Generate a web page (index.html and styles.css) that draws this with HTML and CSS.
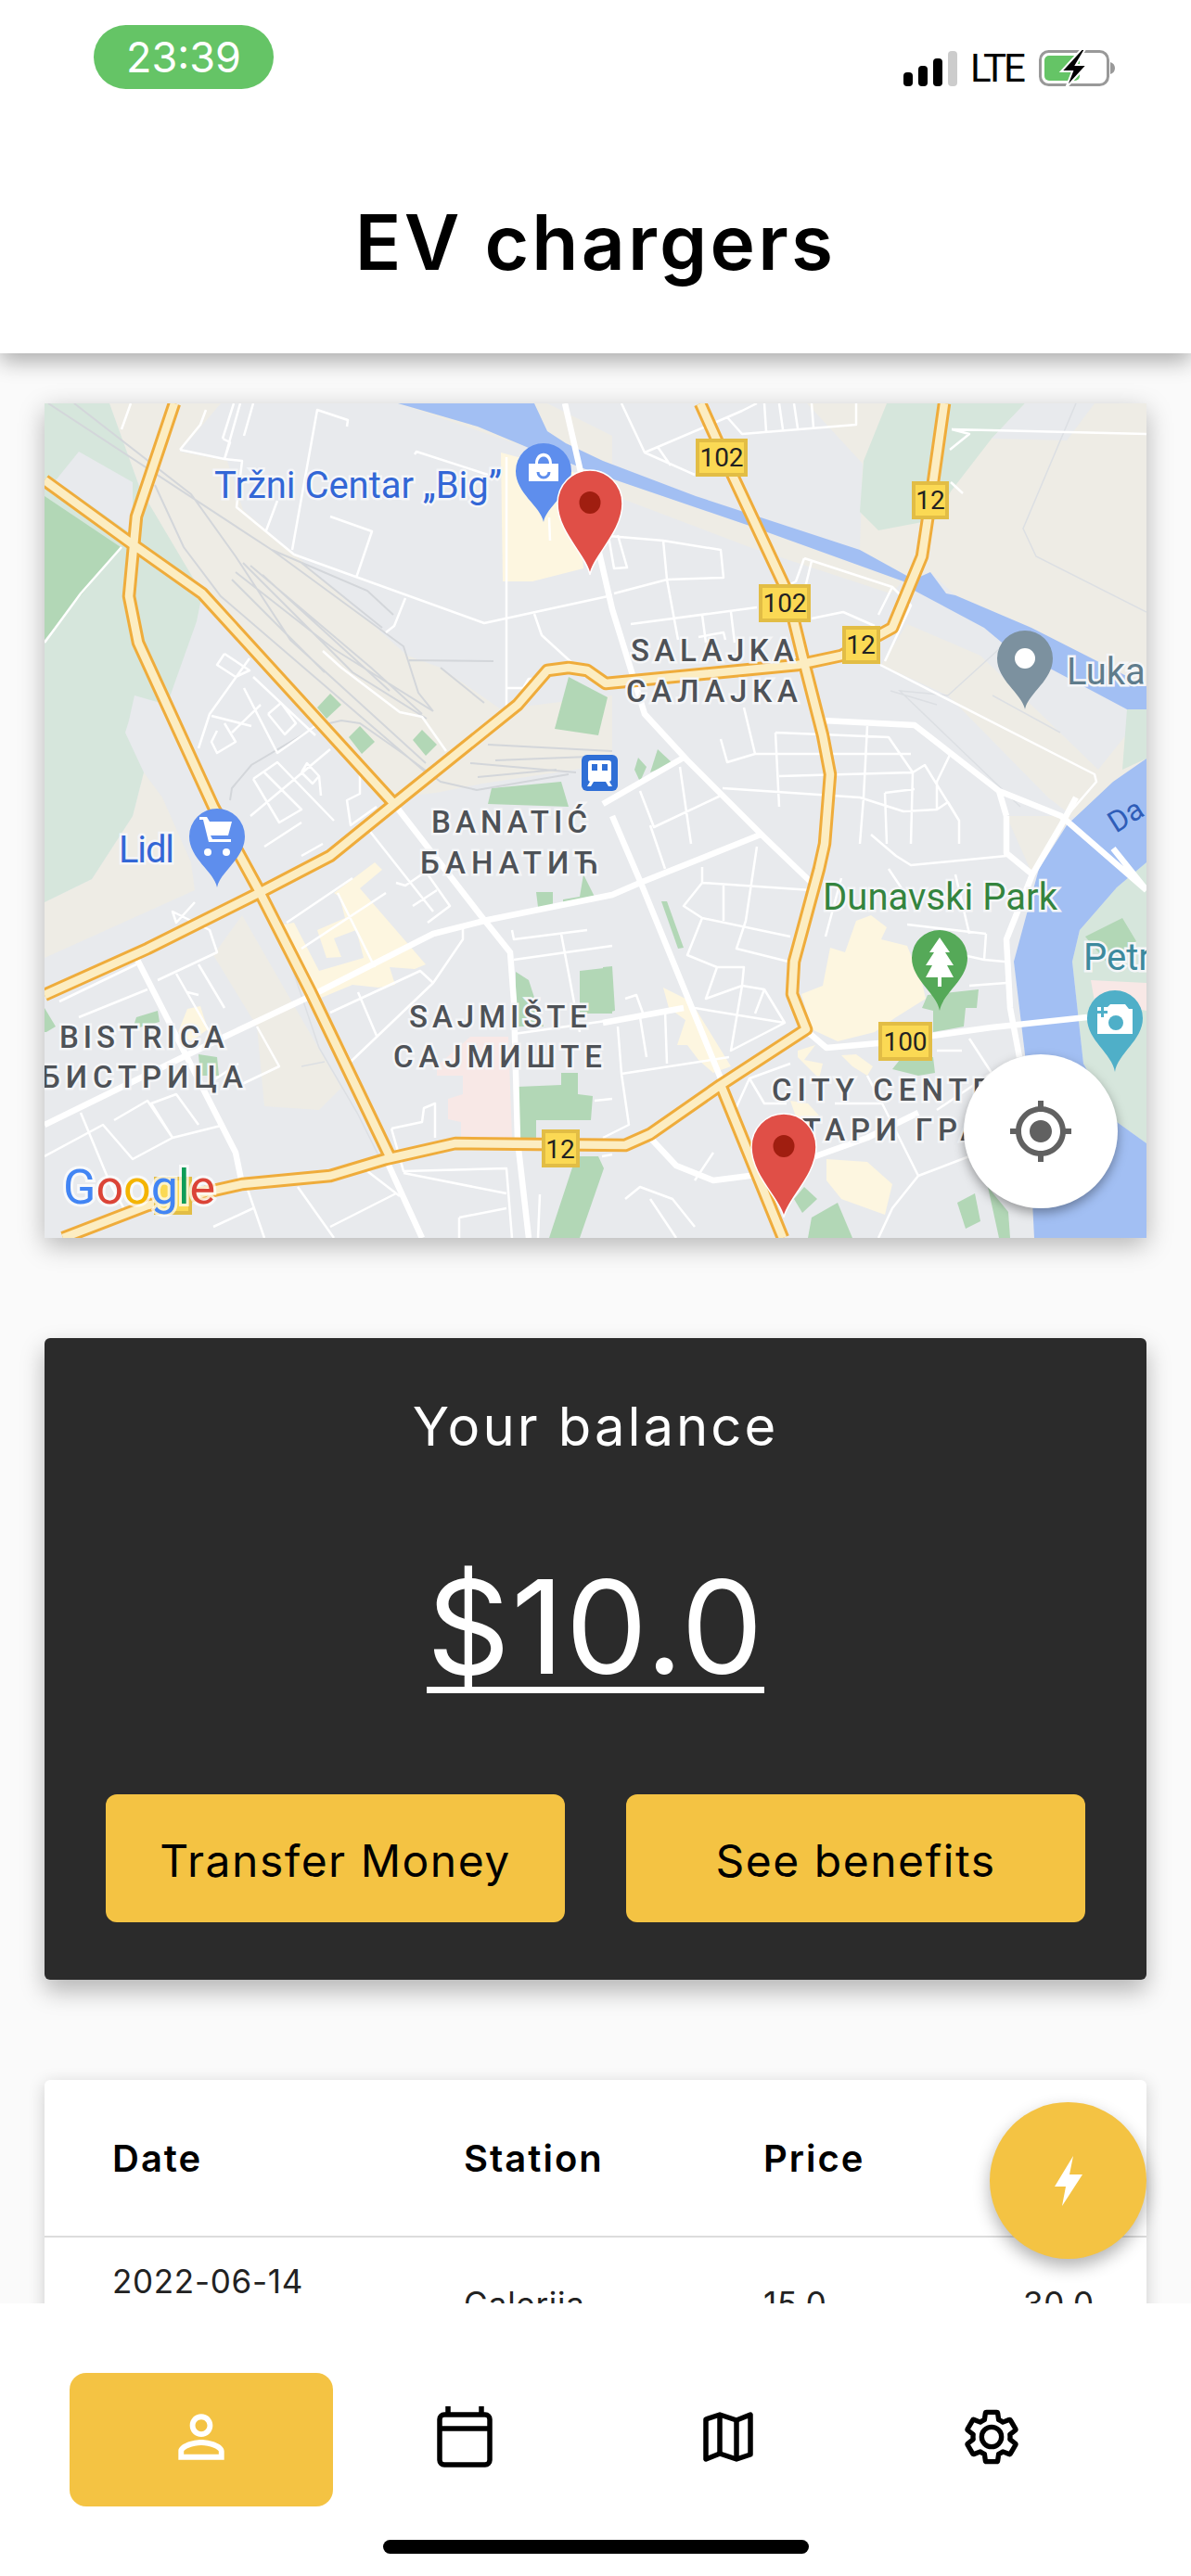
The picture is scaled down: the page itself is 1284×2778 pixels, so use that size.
FILE: index.html
```html
<!DOCTYPE html>
<html lang="en">
<head>
    <meta charset="UTF-8">
    <meta name="viewport" content="width=device-width, initial-scale=1.0">
    <title>EV chargers</title>
    <link rel="stylesheet" href="styles.css">
</head>
<body>
<div class="app">
    <header class="top">
        <div class="status">
            <span class="clock">23:39</span>
            <div class="status-right">
                <svg class="signal" viewBox="0 0 58 38">
                    <rect class="bar" x="0" y="23" width="10" height="15" rx="4"/>
                    <rect class="bar" x="16" y="16" width="10" height="22" rx="4"/>
                    <rect class="bar" x="32" y="8" width="10" height="30" rx="4"/>
                    <rect class="bar-off" x="48" y="0" width="10" height="38" rx="4"/>
                </svg>
                <span class="lte">LTE</span>
                <svg class="battery" viewBox="0 0 82 42">
                    <rect class="batt-box" x="1.500" y="2.500" width="73" height="36" rx="9"/>
                    <rect class="batt-fill" x="6" y="7" width="38" height="27" rx="5"/>
                    <path class="batt-nub" d="M77 14c3 1 5 3 5 6.500s-2 5.500-5 6.500z"/>
                    <path class="batt-bolt" d="M46 0L24 24L36 24L29 42L52 17L40 17L50 0z"/>
                </svg>
            </div>
        </div>
        <h1 class="title">EV chargers</h1>
    </header>

    <main class="content">
        <section class="map">
            <svg class="map-svg" viewBox="48 435 1188 900">
                <!-- land use -->
                <g class="beige">
                    <polygon points="118,435 238,435 194,487 245,497 262,550 317,597 439,707 475,720 540,765 660,750 660,820 620,830 520,845 470,855 425,860 340,770 280,700 216,640 151,527"/>
                    <polygon points="48,973 99,948 143,880 155,833 175,860 206,930 210,960 48,1033"/>
                    <polygon points="230,1030 261,987 368,1173 344,1197 285,1193 277,1107"/>
                    <polygon points="870,435 1236,435 1236,740 1112,677 1030,642 1003,617 985,625 927,593 930,500"/>
                    <polygon points="950,717 978,673 1057,707 1184,830 1236,765 1236,920 1156,880 1130,860 1022,750"/>
                    <polygon points="650,513 808,567 974,627 960,640 808,590 650,530"/>
                    <polygon points="429,435 570,483 660,510 660,470 590,435"/>
                    <polygon points="1085,880 1156,880 1120,930 1113,943"/>
                </g>
                <g class="green-light">
                    <polygon points="48,435 118,435 151,527 218,640 212,670 180,760 145,750 139,777 135,790 155,833 143,880 99,948 48,973"/>
                    <polygon points="956,435 1105,435 1069,473 1025,530 1010,560 947,572 927,552 931,497"/>
                    <polygon points="1236,765 1215,765 1210,830 1236,818"/>
                    <polygon points="1236,930 1204,957 1164,1003 1156,1037 1168,1147 1204,1210 1236,1233"/>
                </g>
                <polygon class="base" points="1105,435 1180,435 1150,475 1069,473"/>
                <polygon class="base" points="60,518 85,487 143,520 143,577"/>
                <polygon class="green" points="48,535 130,590 48,690"/>
                <g class="water">
                    <polygon points="429,435 576,435 590,465 610,478 650,497 750,535 927,593 985,625 1003,617 1020,640 1030,642 1112,677 1236,740 1236,765 1215,765 1136,723 1085,697 1061,677 986,637 974,627 808,567 650,513 570,483 515,460"/>
                    <polygon points="1236,818 1200,843 1150,890 1120,937 1093,1037 1105,1137 1115,1335 1236,1335 1236,1233 1204,1210 1168,1147 1156,1037 1164,1003 1204,957 1236,930"/>
                </g>
                <g class="yellow">
                    <polygon points="540,488 621,510 629,613 574,627 542,627"/>
                    <polygon points="360,963 404,930 412,938 388,958 459,1040 447,1045 420,1043 426,1062 408,1065 380,1062 344,1077 305,997 317,995 344,1047 392,1033 384,1003 360,1012 368,1032 352,1033 342,1003 372,990 366,967"/>
                    <polygon points="202,1088 216,1085 224,1110 206,1123 192,1113"/>
                    <polygon points="887,1063 895,1022 911,1027 923,993 939,987 956,1000 950,1013 978,1020 994,1060 998,1077 966,1097 943,1113 903,1123 875,1110 864,1072"/>
                    <polygon points="715,1065 745,1080 788,1150 769,1157 753,1143 741,1127 730,1127 739,1100 721,1087"/>
                    <polygon points="860,1133 879,1127 867,1143 887,1147 883,1163 860,1140"/>
                    <polygon points="907,1138 923,1137 941,1150 935,1160 919,1150"/>
                    <polygon points="852,1187 871,1190 883,1203 860,1210"/>
                    <polygon points="891,1250 935,1253 962,1277 954,1310 907,1293 891,1273"/>
                </g>
                <polygon class="pink" points="471,1150 507,1118 548,1118 552,1227 497,1227 497,1210 483,1207 483,1185 499,1180 499,1160 471,1160"/>
                <polygon class="pink" points="1176,1057 1236,1060 1236,1090 1180,1080"/>
                <g class="green">
                    <polygon points="613,730 655,752 645,793 598,786"/>
                    <polygon points="356,748 368,760 352,775 342,763"/>
                    <polygon points="388,783 404,800 390,813 376,795"/>
                    <polygon points="455,787 471,803 459,815 445,798"/>
                    <polygon points="530,850 605,843 613,870 526,867"/>
                    <polygon points="688,817 697,827 690,843 684,830"/>
                    <polygon points="709,808 725,823 701,833"/>
                    <polygon points="578,962 596,962 596,978 580,978"/>
                    <polygon points="629,943 641,967 607,975 607,970 625,967"/>
                    <polygon points="556,1048 570,1057 586,1107 556,1107"/>
                    <polygon points="625,1047 660,1043 660,1093 625,1093"/>
                    <polygon points="558,1172 605,1170 605,1157 623,1157 623,1180 639,1182 637,1208 578,1208 578,1227 558,1227"/>
                    <polygon points="621,1247 645,1247 651,1260 625,1335 592,1335"/>
                    <polygon points="48,1087 60,1107 50,1113 48,1113"/>
                    <polygon points="147,1097 170,1090 172,1102 143,1110"/>
                    <polygon points="214,1137 234,1140 236,1160 216,1160"/>
                    <polygon points="713,972 719,972 737,1022 731,1023"/>
                    <polygon points="650,1043 660,1042 663,1090 650,1093"/>
                    <polygon points="994,1087 1000,1073 1055,1067 1053,1087 1041,1087 1039,1107 1006,1113 1006,1090"/>
                    <polygon points="962,1153 970,1143 1006,1140 1008,1157 990,1160"/>
                    <polygon points="856,1293 867,1280 881,1293 865,1308"/>
                    <polygon points="875,1313 903,1297 919,1335 871,1335"/>
                    <polygon points="1032,1297 1051,1287 1057,1317 1041,1325"/>
                    <polygon points="1065,1280 1077,1335 1089,1335 1087,1307"/>
                    <polygon points="1170,1010 1210,990 1225,1015 1195,1040"/>
                </g>

                <!-- rail -->
                <path class="rail" d="M52 435L293 593L435 697L451 747L467 767M80 435L206 533L254 600L313 690L459 823M167 523L198 590L238 643L459 833M293 593L396 637L424 663M325 607L412 677M441 712L532 713M475 720L522 758M254 617L360 700L467 767M262 607L380 725L460 775M250 625L350 725M270 610L400 720L455 770M283 620L420 745M526 803L660 810M534 820L660 815M507 823L621 833M515 838L600 830M248 863L250 850L271 825L342 783L368 777L388 780L435 813L475 843L514 852L613 835"/>
                <path class="rail-fine" d="M1160 435L1103 570L1117 600L1236 660M1077 700L1022 750M1070 750L1143 790M1022 750L970 745L1100 870M960 745L1010 760M300 1000L344 1130L385 1200L410 1250M325 1150L350 1145"/>

                <!-- streets -->
                <path class="street" d="M131 463L141 435M194 485L216 458L222 442M194 485L242 495L261 497L255 547L317 598L522 672L660 642M242 495L259 435M240 473L248 477L242 495M240 473L252 435M263 470L273 435M287 572L299 540M315 593L342 442L375 453L374 460M384 623L401 573L356 557M437 645L425 675L416 682M447 490L449 487L526 512M546 493L546 763M576 662L584 685L619 717M592 558L593 583M546 742L564 742L570 732L590 732M48 693L87 640L131 590M348 702L368 720L431 768L455 773L481 810M269 710L226 770L214 807M273 730L340 793M263 742L299 812L340 783M281 760L250 790M289 770L307 792L319 780L303 758L289 770M228 772L271 783M242 780L254 800L234 812L228 800L234 788M242 705L234 717L254 730L269 723L242 705M388 833L388 856L374 863L378 890L406 870M273 840L299 822L360 885M273 840L301 887L325 873L285 833M356 808L270 880M325 833L331 823L344 837L337 845L325 833M344 837L346 858"/>
                <path class="street" d="M670 435L695 488L749 512M695 488L784 450L800 443L816 435M709 482L723 502M784 450L800 468L923 458L923 435M824 435L826 465M840 435L844 463M856 435L860 462M875 435L877 461M656 578L715 583L777 593L780 623L719 625L715 583M719 625L731 690M662 640L719 625M666 577L676 612L662 613L656 578M680 673L816 655M757 663L761 693M788 660L792 693M753 687L780 682L782 690M867 602L858 627L848 632M867 602L962 633L982 653L954 713M875 605L867 638M875 667L909 660L943 675M962 633L947 663M949 717L1180 835L1182 843L1144 887M777 797L784 822L814 813L802 763M836 790L840 870M836 790L958 795L984 833L982 910M814 813L982 813M840 837L984 833M935 783L931 860L927 910M779 850L927 860L974 875L1010 873L1022 865L1034 885L1034 910M954 855L986 851M954 855L956 910M984 833L997 825L1034 885M690 853L705 892L777 858M733 827L745 910M1026 810L1010 843L1010 873M1026 463L1236 468M1026 463L1045 468L1024 485M1038 532L1025 520"/>
                <path class="street" d="M285 913L325 887M325 923L348 910M396 893L467 983M309 995L380 947M325 1023L416 963M427 952L437 955L459 940L485 977L461 995M445 977L471 960M364 963L404 1043M356 1092L453 1047L467 1060L378 1145M344 1077L378 1145M386 1070L406 1117M467 1060L499 1013L499 1002M552 1003L554 1013L633 1003M554 1035L660 1020M605 1007L625 1113M554 1115L660 1100M64 1080L147 1040M85 1097L159 1067M170 1057L234 1027L226 1003L186 983L190 995L210 973M190 1050L226 1113M214 1040L242 1087M202 1070L214 1073M257 1147L218 1173M277 1107L301 1150L259 1170M48 1247L111 1213L143 1250L186 1227L159 1187L123 1208M186 1227L242 1213M87 1200L119 1277L139 1313M214 1213L190 1180L163 1190L186 1227M265 1277L285 1335M230 1323L273 1303M321 1280L360 1335M356 1323L427 1287M396 1263L431 1290M422 1217L435 1263L546 1260L552 1335M435 1265L546 1287M495 1313L546 1303M495 1313L495 1335M422 1217L455 1210L457 1195L469 1190L469 1227M582 1288L580 1335M641 1187L660 1185M649 1247L660 1245"/>
                <path class="street" d="M701 890L717 937M757 935L757 952L875 960M757 952L737 977L757 990L852 1010M780 953L780 993M757 990L741 1030L773 1043L761 1077L800 1063L824 1067M773 1043L802 1043L800 1063L788 1133L846 1103L824 1067L814 1093M816 913L804 993L794 1023L850 1037M674 1077L686 1073L694 1095M666 1107L670 1158L786 1140M670 1158L678 1213L650 1227M690 1097L697 1140M717 1090L719 1147M749 1087L846 1103M939 900L966 923L982 933L1085 923M958 937L978 967M1030 943L1045 1007M907 947L890 1010M1063 1007L1061 1035L994 1020M978 997L1063 1007M1061 1035L1083 1037M1045 1063L1085 1060M951 1190L990 1268L1045 1247M990 1268L962 1303L947 1335M1045 1120L1069 1157L1010 1197M1010 1133L1037 1133M852 1147L808 1163L824 1190L848 1190M808 1163L788 1207M701 1293L729 1335M674 1293L690 1280L725 1293L749 1323M749 1273L769 1243M900 1190L951 1190M935 1160L951 1190"/>

                <!-- main white roads -->
                <path class="road" d="M425 867L518 987L550 1027L554 1080L558 1230L570 1335M48 1213L238 1120L329 1077L467 1007L526 992L660 965L690 952L820 900M650 867L737 817M609 435L660 657L695 770L741 820L824 903L875 952M660 880L690 950L777 1163M887 777L986 782L1077 853L1144 880L1236 960M1085 880L1085 920L1113 943L1085 1013L1089 1087L1099 1140M1113 943L1144 890L1160 860M871 1113L891 1130L947 1125L1069 1108L1172 1097M147 1033L198 1133L254 1243L261 1277M701 1227L729 1257L769 1273L808 1268L879 1247L935 1227L990 1200M650 1103L737 1087M416 1250L455 1335M1077 853L1085 880M1236 960L1200 915"/>

                <!-- highways -->
                <g>
                    <path class="hw-edge" d="M188 435L147 557L139 643L149 693L230 870L279 960L335 1070L420 1247M48 518L143 587L218 640L425 867M48 1073L159 1023L285 960L356 923L425 867L558 760L590 723L613 720L633 723L653 737L860 717L907 707L962 677L994 600L1006 520L1018 435M755 435L790 513L848 637L865 707L887 793L895 835L889 910L883 937L856 1037L854 1072L869 1110L777 1170L701 1223L674 1235L491 1233L416 1250L356 1268L261 1277L159 1300L68 1335M777 1170L844 1335"/>
                    <path class="hw-fill" d="M188 435L147 557L139 643L149 693L230 870L279 960L335 1070L420 1247M48 518L143 587L218 640L425 867M48 1073L159 1023L285 960L356 923L425 867L558 760L590 723L613 720L633 723L653 737L860 717L907 707L962 677L994 600L1006 520L1018 435M755 435L790 513L848 637L865 707L887 793L895 835L889 910L883 937L856 1037L854 1072L869 1110L777 1170L701 1223L674 1235L491 1233L416 1250L356 1268L261 1277L159 1300L68 1335M777 1170L844 1335"/>
                </g>

                <!-- shields -->
                <g class="shield">
                    <rect x="752" y="475" width="52" height="37"/>
                    <rect x="985" y="521" width="36" height="37"/>
                    <rect x="820" y="632" width="52" height="37"/>
                    <rect x="910" y="677" width="37" height="37"/>
                    <rect x="586" y="1220" width="37" height="37"/>
                    <rect x="949" y="1104" width="54" height="38"/>
                    <rect x="168" y="1271" width="37" height="37"/>
                </g>
                <g class="shield-text">
                    <text x="778" y="503">102</text>
                    <text x="1003" y="549">12</text>
                    <text x="846" y="660">102</text>
                    <text x="928" y="705">12</text>
                    <text x="604" y="1249">12</text>
                    <text x="976" y="1133">100</text>
                </g>

                <!-- labels -->
                <g class="label-area">
                    <text x="680" y="713" textLength="176">SALAJKA</text>
                    <text x="675" y="757" textLength="185">САЛАЈКА</text>
                    <text x="465" y="898" textLength="168">BANATIĆ</text>
                    <text x="453" y="942" textLength="192">БАНАТИЋ</text>
                    <text x="441" y="1108" textLength="192">SAJMIŠTE</text>
                    <text x="424" y="1151" textLength="225">САЈМИШТЕ</text>
                    <text x="64" y="1130" textLength="178">BISTRICA</text>
                    <text x="44" y="1173" textLength="218">БИСТРИЦА</text>
                    <text x="832" y="1187" textLength="262">CITY CENTRE</text>
                    <text x="838" y="1230" textLength="250">СТАРИ ГРАД</text>
                </g>
                <g class="label-poi">
                    <text class="poi-blue" x="231" y="537" textLength="310">Tržni Centar „Big”</text>
                    <text class="poi-blue" x="128" y="930" textLength="60">Lidl</text>
                    <text class="poi-green" x="887" y="981" textLength="253">Dunavski Park</text>
                    <text class="poi-slate" x="1150" y="738">Luka</text>
                    <text class="poi-teal" x="1168" y="1046">Petr</text>
                    <text class="poi-river" transform="translate(1203 899) rotate(-32)">Da</text>
                </g>
                <text class="google" x="68" y="1298"><tspan class="g-blue">G</tspan><tspan class="g-red">o</tspan><tspan class="g-yellow">o</tspan><tspan class="g-blue">g</tspan><tspan class="g-green">l</tspan><tspan class="g-red">e</tspan></text>

                <!-- transit stop -->
                <rect class="stop" x="627" y="814" width="39" height="39" rx="6"/>
                <path class="stop-icon" d="M637 820h19a3 3 0 0 1 3 3v17a3 3 0 0 1-3 3h-19a3 3 0 0 1-3-3v-17a3 3 0 0 1 3-3zM638 824v7h6v-7zM649 824v7h6v-7zM636 843l-3 5h4l3-5zM657 843l3 5h-4l-3-5z"/>

                <!-- place pins -->
                <g class="pin-blue" transform="translate(586 508)">
                    <path d="M0 55C-3 38-30 24-30 0A30 30 0 1 1 30 0C30 24 3 38 0 55z"/>
                    <path class="pin-glyph" d="M-16-8h32v19h-32zM-9-8c0-15 18-15 18 0h-3c0-10-12-10-12 0z"/>
                    <path class="pin-cut" d="M-6 1a6 6 0 0 0 12 0"/>
                </g>
                <g class="pin-blue" transform="translate(234 902)">
                    <path d="M0 55C-3 38-30 24-30 0A30 30 0 1 1 30 0C30 24 3 38 0 55z"/>
                    <path class="pin-glyph" d="M-19-21h8l3 5h24l-4 15h-19l2 4h20v3h-24l-6-24h-4z"/>
                    <circle class="pin-glyph" cx="-10" cy="17" r="4"/>
                    <circle class="pin-glyph" cx="10" cy="17" r="4"/>
                </g>
                <g class="pin-slate" transform="translate(1105 710)">
                    <path d="M0 55C-3 38-30 24-30 0A30 30 0 1 1 30 0C30 24 3 38 0 55z"/>
                    <circle class="pin-glyph" cx="0" cy="0" r="11"/>
                </g>
                <g class="pin-green" transform="translate(1013 1033)">
                    <path d="M0 57C-3 38-30 24-30 0A30 30 0 1 1 30 0C30 24 3 38 0 57z"/>
                    <path class="pin-glyph" d="M0-22L11-6H6L15 8H8L15 21H2V31H-2V21H-15L-8 8H-15L-6-6H-11z"/>
                </g>
                <g class="pin-teal" transform="translate(1202 1098)">
                    <path d="M0 58C-3 38-30 24-30 0A30 30 0 1 1 30 0C30 24 3 38 0 58z"/>
                    <path class="pin-glyph" d="M-19-12h11l3-3h16l4 5h4v27h-38z"/>
                    <circle class="pin-cam" cx="1" cy="5" r="8"/>
                    <path class="pin-cam" d="M-15-12h3v4h4v3h-4v4h-3v-4h-4v-3h4z"/>
                </g>

                <!-- selected chargers -->
                <g class="charger" transform="translate(636 542)">
                    <path d="M0 78C-3 58-35 32-35 1A35 36 0 1 1 35 1C35 32 3 58 0 78z"/>
                    <ellipse class="charger-dot" cx="0" cy="0" rx="11.500" ry="12"/>
                </g>
                <g class="charger" transform="translate(845 1236)">
                    <path d="M0 77C-3 58-35 32-35 1A35 36 0 1 1 35 1C35 32 3 58 0 77z"/>
                    <ellipse class="charger-dot" cx="0" cy="0" rx="11.500" ry="12"/>
                </g>
            </svg>
            <button class="locate">
                <svg viewBox="0 0 24 24"><path d="M12 8c-2.210 0-4 1.790-4 4s1.790 4 4 4 4-1.790 4-4-1.790-4-4-4zm8.940 3c-.46-4.170-3.770-7.480-7.940-7.940V1h-2v2.060C6.830 3.520 3.520 6.830 3.060 11H1v2h2.060c.46 4.170 3.770 7.480 7.940 7.940V23h2v-2.060c4.170-.46 7.480-3.770 7.940-7.940H23v-2h-2.060zM12 19c-3.870 0-7-3.130-7-7s3.130-7 7-7 7 3.130 7 7-3.130 7-7 7z"/></svg>
            </button>
        </section>

        <section class="balance">
            <h2 class="balance-label">Your balance</h2>
            <div class="balance-amount"><span>$10.0</span></div>
            <div class="balance-actions">
                <button class="action">Transfer Money</button>
                <button class="action">See benefits</button>
            </div>
        </section>

        <section class="history">
            <div class="history-row history-head">
                <div>Date</div>
                <div>Station</div>
                <div>Price</div>
                <div>kWh</div>
            </div>
            <div class="history-row history-item">
                <div>2022-06-14<br>18:20</div>
                <div>Galerija</div>
                <div>15.0</div>
                <div>30.0</div>
            </div>
        </section>

        <button class="fab">
            <svg viewBox="0 0 30 54"><path d="M20 0L0 33H12L8 54L30 20H16z"/></svg>
        </button>
    </main>

    <footer class="nav">
        <div class="nav-items">
            <a class="nav-item active">
                <svg class="icon-user" viewBox="0 0 24 24"><path d="M12 5.900c1.160 0 2.100.94 2.100 2.100s-.94 2.100-2.100 2.100S9.900 9.160 9.900 8s.94-2.100 2.100-2.100m0 9c2.970 0 6.100 1.460 6.100 2.100v1.100H5.900V17c0-.64 3.130-2.100 6.100-2.100M12 4C9.790 4 8 5.790 8 8s1.790 4 4 4 4-1.790 4-4-1.790-4-4-4zm0 9c-2.670 0-8 1.340-8 4v3h16v-3c0-2.660-5.330-4-8-4z"/></svg>
            </a>
            <a class="nav-item">
                <svg class="icon-line icon-calendar" viewBox="0 0 60 66">
                    <rect x="3" y="9" width="54" height="54" rx="5"/>
                    <path d="M3 24H57M12 0V9M48 0V9"/>
                </svg>
            </a>
            <a class="nav-item">
                <svg class="icon-line icon-map" viewBox="0 0 54 54">
                    <path d="M3 8L18 3L36 9L51 3V46L36 51L18 45L3 51z"/>
                    <path d="M18 3V45M36 9V51"/>
                </svg>
            </a>
            <a class="nav-item">
                <svg class="icon-gear" viewBox="0 0 24 24">
                    <path d="M19.430 12.980c.04-.32.07-.64.07-.98s-.03-.66-.07-.98l2.110-1.650c.19-.15.24-.42.12-.64l-2-3.460c-.12-.22-.39-.3-.61-.22l-2.490 1c-.52-.4-1.080-.73-1.690-.98l-.38-2.650C14.460 2.180 14.250 2 14 2h-4c-.25 0-.46.18-.49.42l-.38 2.650c-.61.25-1.170.59-1.690.98l-2.490-1c-.23-.09-.49 0-.61.22l-2 3.460c-.13.22-.07.49.12.64l2.110 1.650c-.04.32-.07.65-.07.98s.03.66.07.98l-2.110 1.650c-.19.15-.24.42-.12.64l2 3.460c.12.22.39.3.61.22l2.490-1c.52.4 1.080.73 1.690.98l.38 2.650c.03.24.24.42.49.42h4c.25 0 .46-.18.49-.42l.38-2.650c.61-.25 1.170-.59 1.690-.98l2.490 1c.23.09.49 0 .61-.22l2-3.460c.12-.22.07-.49-.12-.64l-2.110-1.650z"/>
                    <circle cx="12" cy="12" r="4"/>
                </svg>
            </a>
        </div>
        <div class="home-bar"></div>
    </footer>
</div>
</body>
</html>
```

FILE: styles.css
```css
body {
    margin: 0;
    font-family: 'Inter', sans-serif;
    background: #fafafa;
    color: #000;
}
button {
    border: none;
    font-family: inherit;
    padding: 0;
}
.app {
    width: 1284px;
    height: 2778px;
    display: flex;
    flex-direction: column;
    overflow: hidden;
}

/* header */
.top {
    height: 381px;
    flex: none;
    background: #fff;
    box-shadow: 0 8px 22px rgba(0, 0, 0, 0.32);
    position: relative;
    z-index: 5;
}
.status {
    display: flex;
    justify-content: space-between;
    align-items: flex-start;
    padding: 27px 82px 0 101px;
}
.clock {
    width: 194px;
    height: 69px;
    border-radius: 35px;
    background: #65c466;
    color: #fff;
    font-size: 45px;
    line-height: 69px;
    text-align: center;
}
.status-right {
    display: flex;
    align-items: center;
    margin-top: 26px;
}
.signal {
    width: 58px;
    height: 38px;
}
.bar { fill: #000; }
.bar-off { fill: #ccc; }
.lte {
    font-family: 'Roboto', sans-serif;
    font-size: 42px;
    line-height: 38px;
    letter-spacing: -3px;
    margin: 0 16px 0 14px;
    width: 58px;
}
.battery {
    width: 82px;
    height: 42px;
}
.batt-box {
    fill: none;
    stroke: #999;
    stroke-width: 3;
}
.batt-fill { fill: #65c466; }
.batt-nub { fill: #999; }
.batt-bolt {
    fill: #000;
    stroke: #fff;
    stroke-width: 2;
}
.title {
    margin: 116px 0 0;
    text-align: center;
    font-size: 82px;
    line-height: 100px;
    font-weight: 600;
    letter-spacing: 3.200px;
}

/* page body */
.content {
    flex: 1;
    position: relative;
    overflow: hidden;
    padding: 54px 48px 0;
    display: flex;
    flex-direction: column;
    gap: 108px;
}

/* map */
.map {
    position: relative;
    height: 900px;
    flex: none;
    box-shadow: 0 8px 26px rgba(0, 0, 0, 0.28);
}
.map-svg {
    display: block;
    width: 1188px;
    height: 900px;
    background: #e8eaed;
}
.beige { fill: #eeece5; }
.green-light { fill: #d6e6dc; }
.green { fill: #b2d7b6; }
.base { fill: #e8eaed; }
.water { fill: #a2bff3; }
.yellow { fill: #fdf6e0; }
.pink { fill: #f8e8e6; }
.rail {
    fill: none;
    stroke: #d3d6da;
    stroke-width: 2;
}
.rail-fine {
    fill: none;
    stroke: #dcdfe3;
    stroke-width: 1.500;
}
.street {
    fill: none;
    stroke: #fff;
    stroke-width: 2.500;
    stroke-linejoin: round;
}
.road {
    fill: none;
    stroke: #fff;
    stroke-width: 6.500;
    stroke-linejoin: round;
}
.hw-edge {
    fill: none;
    stroke: #efac3b;
    stroke-width: 14.500;
    stroke-linejoin: round;
}
.hw-fill {
    fill: none;
    stroke: #fcedc2;
    stroke-width: 8.500;
    stroke-linejoin: round;
}
.shield {
    fill: #fbd954;
    stroke: #e2bd45;
    stroke-width: 4;
}
.shield-text {
    font-family: 'Roboto', sans-serif;
    font-size: 28px;
    fill: #222;
    text-anchor: middle;
}
.label-area {
    font-family: 'Roboto', sans-serif;
    font-size: 33px;
    font-weight: 500;
    fill: #4e5257;
    stroke: #f5f6f8;
    stroke-width: 5;
    paint-order: stroke;
}
.label-poi {
    font-family: 'Roboto', sans-serif;
    font-size: 40px;
    stroke: #f5f6f8;
    stroke-width: 5;
    paint-order: stroke;
}
.poi-blue { fill: #3367d6; }
.poi-green { fill: #34843e; }
.poi-slate { fill: #5f7c8c; }
.poi-teal { fill: #3d8a9e; }
.poi-river {
    fill: #2f5db8;
    font-size: 32px;
    stroke: none;
}
.google {
    font-family: 'Roboto', sans-serif;
    font-size: 52px;
    stroke: #fff;
    stroke-opacity: 0.7;
    stroke-width: 6;
    paint-order: stroke;
}
.g-blue { fill: #4285f4; }
.g-red { fill: #db4437; }
.g-yellow { fill: #f4b400; }
.g-green { fill: #0f9d58; }
.stop { fill: #2f6fd6; }
.stop-icon {
    fill: #fff;
    fill-rule: evenodd;
}
.pin-blue { fill: #5e8eed; }
.pin-slate { fill: #7c919f; }
.pin-green { fill: #55a958; }
.pin-teal { fill: #4fafc8; }
.pin-glyph { fill: #fff; }
.pin-cut {
    fill: none;
    stroke: #5e8eed;
    stroke-width: 3;
}
.pin-cam { fill: #4fafc8; }
.charger {
    fill: #e04f47;
    stroke: #fff;
    stroke-width: 1.500;
}
.charger-dot {
    fill: #a01e10;
    stroke: none;
}
.locate {
    position: absolute;
    left: 991px;
    top: 702px;
    width: 166px;
    height: 166px;
    border-radius: 50%;
    background: #fff;
    box-shadow: 0 5px 12px rgba(0, 0, 0, 0.35);
    display: flex;
    align-items: center;
    justify-content: center;
}
.locate svg {
    width: 72px;
    height: 72px;
    fill: #616161;
}

/* balance card */
.balance {
    height: 692px;
    flex: none;
    border-radius: 6px;
    background: #2b2b2b;
    color: #fff;
    box-shadow: 0 12px 26px rgba(0, 0, 0, 0.28);
    display: flex;
    flex-direction: column;
    align-items: center;
}
.balance-label {
    margin: 60px 0 0;
    font-size: 58px;
    line-height: 70px;
    font-weight: 400;
    letter-spacing: 3px;
}
.balance-amount {
    margin-top: 101px;
    height: 194px;
    font-size: 140px;
    line-height: 160px;
    letter-spacing: 1.500px;
}
.balance-amount span {
    display: block;
    border-bottom: 7px solid #fff;
    height: 145px;
}
.balance-actions {
    display: flex;
    gap: 66px;
    margin-top: 67px;
}
.action {
    width: 495px;
    height: 138px;
    border-radius: 12px;
    background: #f4c343;
    color: #000;
    font-size: 48px;
    letter-spacing: 1.500px;
    padding-top: 5px;
}

/* charging history */
.history {
    flex: none;
    background: #fff;
    border-radius: 6px;
    box-shadow: 0 4px 18px rgba(0, 0, 0, 0.18);
}
.history-row {
    display: grid;
    grid-template-columns: 379px 323px 280px 1fr;
    padding-left: 73px;
    align-items: center;
}
.history-head {
    height: 168px;
    border-bottom: 2px solid #dcdcdc;
    font-size: 40px;
    font-weight: 600;
    letter-spacing: 2px;
}
.history-item {
    padding-top: 23px;
    font-size: 35px;
    line-height: 48px;
    letter-spacing: 0.700px;
    color: #222;
}
.fab {
    position: absolute;
    right: 48px;
    top: 1886px;
    width: 169px;
    height: 169px;
    border-radius: 50%;
    background: #f4c343;
    box-shadow: 0 8px 18px rgba(0, 0, 0, 0.3);
    display: flex;
    align-items: center;
    justify-content: center;
}
.fab svg {
    width: 30px;
    height: 54px;
    fill: #fff;
}

/* bottom navigation */
.nav {
    height: 294px;
    flex: none;
    background: #fff;
    position: relative;
    z-index: 4;
    display: flex;
    flex-direction: column;
    align-items: center;
    padding-top: 75px;
    box-sizing: border-box;
}
.nav-items {
    display: grid;
    grid-template-columns: repeat(4, 284px);
    width: 1136px;
    margin-left: 2px;
}
.nav-item {
    height: 144px;
    display: flex;
    align-items: center;
    justify-content: center;
    padding-bottom: 6px;
    box-sizing: border-box;
    border-radius: 18px;
}
.nav-item.active {
    background: #f4c343;
}
.icon-user {
    width: 74px;
    height: 74px;
    fill: #fff;
}
.icon-line {
    fill: none;
    stroke: #000;
    stroke-width: 5.500;
    stroke-linejoin: round;
}
.icon-calendar {
    width: 60px;
    height: 66px;
}
.icon-map {
    width: 54px;
    height: 54px;
}
.icon-gear {
    width: 64px;
    height: 64px;
    fill: none;
    stroke: #000;
    stroke-width: 2;
    stroke-linejoin: round;
}
.home-bar {
    width: 459px;
    height: 15px;
    border-radius: 8px;
    background: #000;
    margin-top: 36px;
}
```
